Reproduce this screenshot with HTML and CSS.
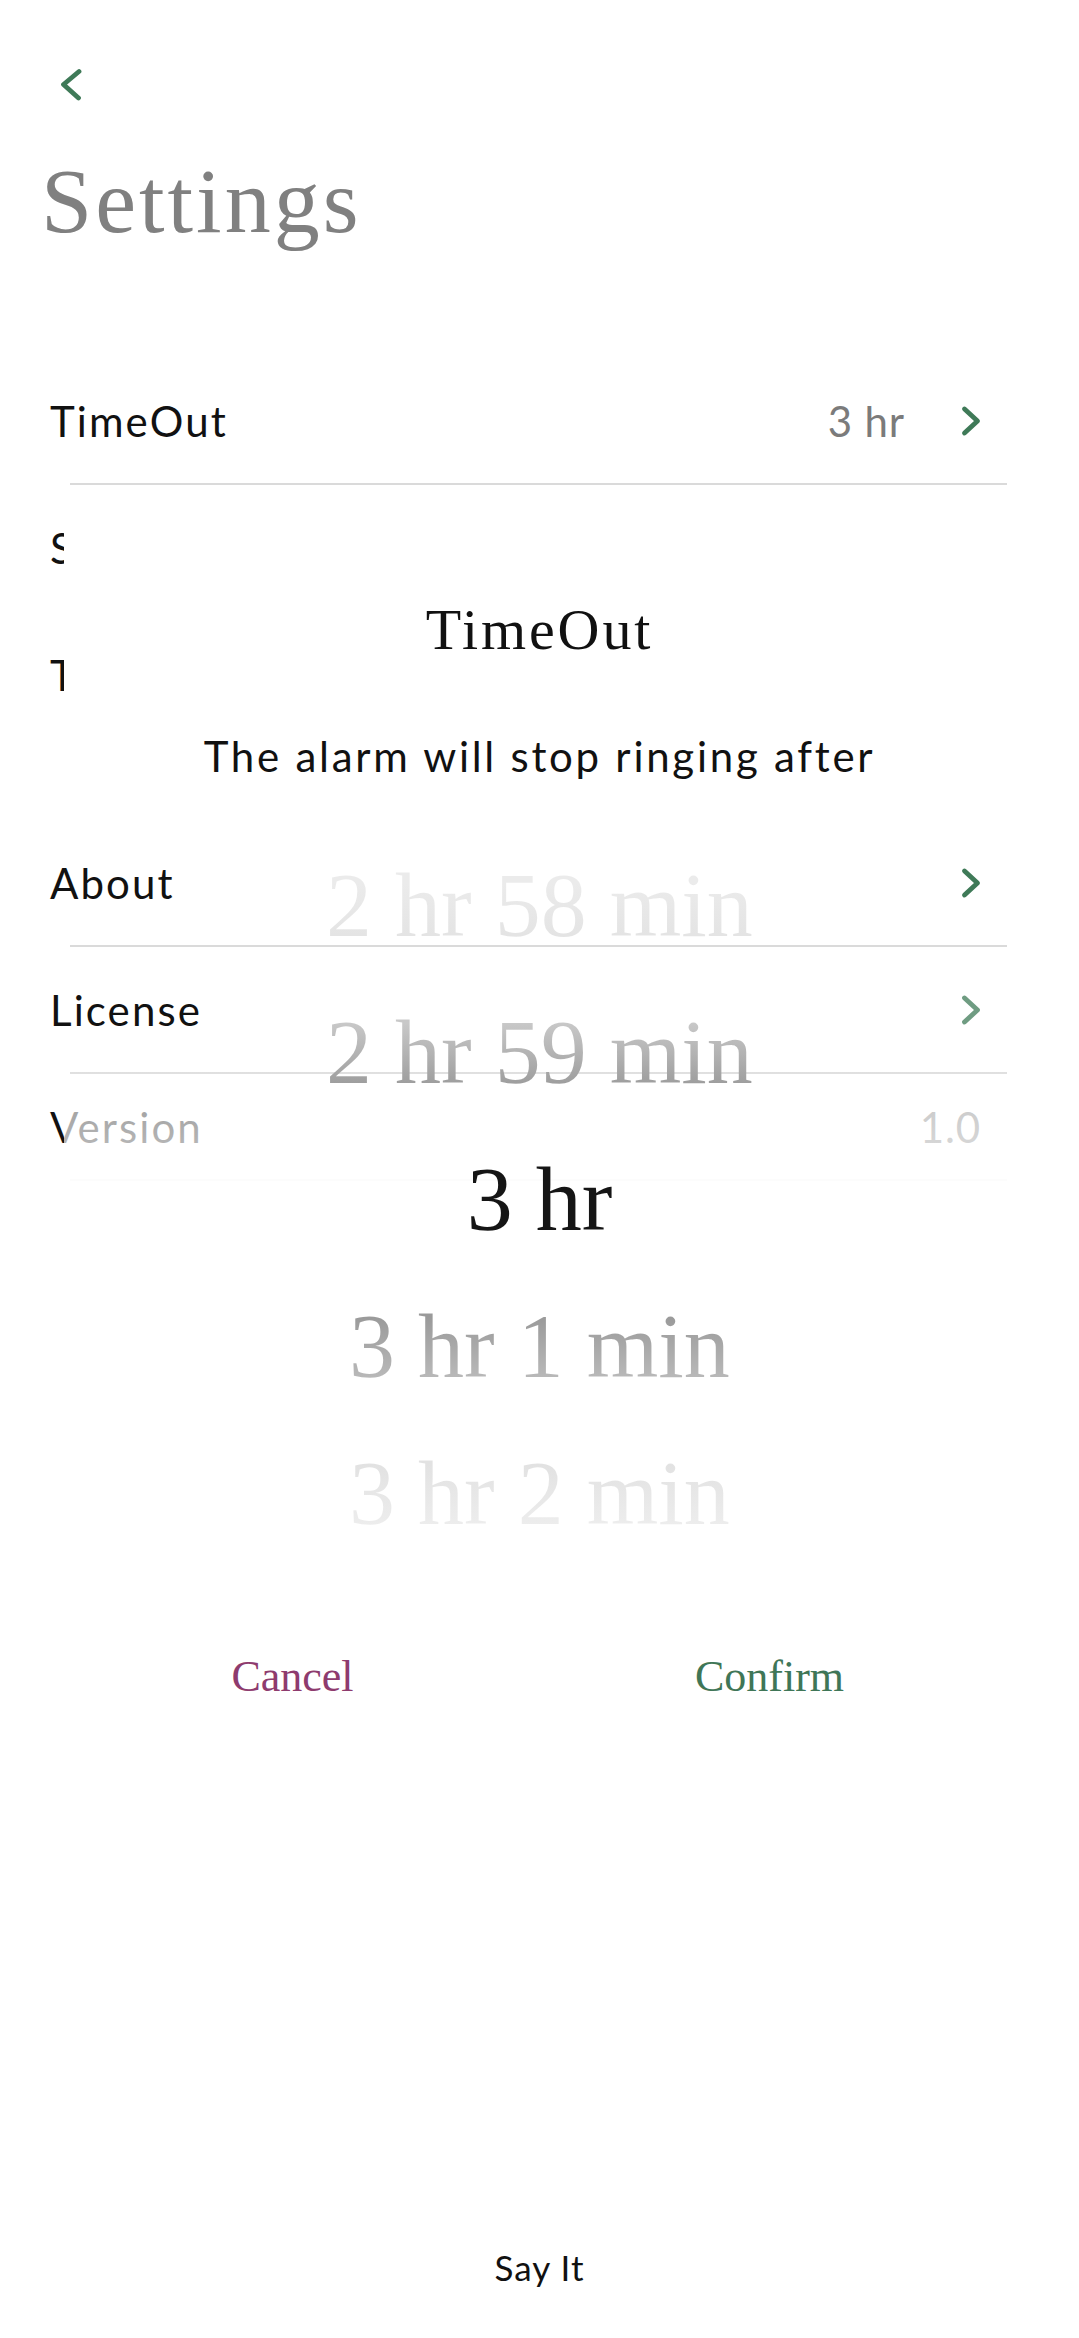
FILE: index.html
```html
<!DOCTYPE html>
<html lang="en">
<head>
<meta charset="utf-8">
<title>Settings</title>
<link rel="stylesheet" href="styles.css">
</head>
<body>
<div class="screen">
  <header class="topbar">
    <button class="back" aria-label="Back">
      <svg class="back-icon" viewBox="0 0 22 33" width="22" height="33"><path d="M19 3.5 L3.5 16.5 L18.5 30" /></svg>
    </button>
  </header>
  <h1 class="title">Settings</h1>

  <ul class="list">
    <li class="row">
      <span class="label">TimeOut</span>
      <span class="value">3 hr</span>
      <svg class="chev" viewBox="0 0 20 32" width="20" height="32"><path d="M3.5 4 L16.5 16 L3.5 28" /></svg>
    </li>
    <li class="row">
      <span class="label">Snooze</span>
      <svg class="chev" viewBox="0 0 20 32" width="20" height="32"><path d="M3.5 4 L16.5 16 L3.5 28" /></svg>
    </li>
    <li class="row">
      <span class="label">Theme</span>
      <svg class="chev" viewBox="0 0 20 32" width="20" height="32"><path d="M3.5 4 L16.5 16 L3.5 28" /></svg>
    </li>
    <li class="spacer"></li>
    <li class="row">
      <span class="label">About</span>
      <svg class="chev" viewBox="0 0 20 32" width="20" height="32"><path d="M3.5 4 L16.5 16 L3.5 28" /></svg>
    </li>
    <li class="row">
      <span class="label">License</span>
      <svg class="chev chev-soft" viewBox="0 0 20 32" width="20" height="32"><path d="M3.5 4 L16.5 16 L3.5 28" /></svg>
    </li>
    <li class="row row-plain">
      <span class="label">Version</span>
      <span class="value">1.0</span>
    </li>
  </ul>

  <footer class="footer">Say It</footer>
</div>

<section class="sheet" role="dialog" aria-label="TimeOut">
  <h2 class="sheet-title">TimeOut</h2>
  <p class="sheet-sub">The alarm will stop ringing after</p>
  <div class="picker">
    <div class="pick pick-far-top">2 hr 58 min</div>
    <div class="pick pick-near-top">2 hr 59 min</div>
    <div class="pick pick-selected">3 hr</div>
    <div class="pick pick-near-bottom">3 hr 1 min</div>
    <div class="pick pick-far-bottom">3 hr 2 min</div>
  </div>
  <div class="actions">
    <button class="action action-cancel">Cancel</button>
    <button class="action action-confirm">Confirm</button>
  </div>
</section>
</body>
</html>
```

FILE: styles.css
```css
* { box-sizing: border-box; }

html, body {
  margin: 0;
  padding: 0;
  background: #ffffff;
}

body {
  position: relative;
  width: 1079px;
  min-height: 2338px;
  font-family: Lato, "Noto Sans", sans-serif;
  color: #111111;
  overflow: hidden;
}

.screen {
  display: flex;
  flex-direction: column;
  min-height: 2338px;
}

.topbar {
  height: 101px;
  padding: 68px 0 0 60px;
}

.back {
  display: block;
  padding: 0;
  margin: 0;
  border: 0;
  background: none;
  line-height: 0;
}

.back-icon {
  display: block;
  fill: none;
  stroke: #3f7a58;
  stroke-width: 4.8;
  stroke-linecap: round;
  stroke-linejoin: round;
}

.title {
  margin: 50px 0 0 41px;
  font-family: "Liberation Serif", serif;
  font-weight: 400;
  font-size: 92px;
  line-height: 100px;
  letter-spacing: 3px;
  color: #808080;
}

.list {
  list-style: none;
  margin: 107px 0 0 0;
  padding: 0;
}

.row {
  display: flex;
  align-items: center;
  height: 127px;
  padding: 0 98px 2px 50px;
  font-size: 42px;
  line-height: 50px;
  letter-spacing: 0.05em;
  background-image: linear-gradient(#dadada, #dadada);
  background-repeat: no-repeat;
  background-position: 70px 100%;
  background-size: 937px 2px;
}

.row-plain {
  height: 107px;
}

.spacer {
  height: 81px;
}

.label {
  flex: 1;
  color: #111111;
}

.value {
  color: #7b7b7b;
  letter-spacing: 0.02em;
}

.chev {
  display: block;
  margin-left: 56px;
  fill: none;
  stroke: #3f7a58;
  stroke-width: 4.8;
  stroke-linecap: round;
  stroke-linejoin: round;
}

.chev-soft {
  stroke: #6f9c82;
}

.footer {
  margin-top: auto;
  padding-bottom: 46px;
  text-align: center;
  font-size: 35px;
  line-height: 50px;
  letter-spacing: 0.03em;
  color: #111111;
}

/* Bottom-sheet dialog laid over the settings list */
.sheet {
  position: absolute;
  top: 500px;
  left: 0;
  right: 0;
  height: 1300px;
  padding-top: 95px;
  text-align: center;
  background-image: linear-gradient(to bottom,
    #ffffff 0px,
    #ffffff 300px,
    rgba(255,255,255,0) 320px,
    rgba(255,255,255,0) 560px,
    rgba(255,255,255,0.62) 610px,
    rgba(255,255,255,0.7) 650px,
    rgba(255,255,255,0.93) 681px,
    #ffffff 720px,
    #ffffff 100%);
  background-repeat: no-repeat;
  background-position: 64px 0;
  background-size: calc(100% - 64px) 100%;
}

.sheet-title {
  margin: 0;
  font-family: "Liberation Serif", serif;
  font-weight: 400;
  font-size: 58px;
  line-height: 70px;
  letter-spacing: 0.05em;
  color: #111111;
}

.sheet-sub {
  margin: 61px 0 0 0;
  font-size: 42px;
  line-height: 60px;
  letter-spacing: 0.065em;
  color: #111111;
}

.picker {
  margin-top: 46px;
  display: flex;
  flex-direction: column;
}

.pick {
  height: 147px;
  font-family: "Liberation Serif", serif;
  font-size: 92px;
  line-height: 147px;
  white-space: nowrap;
  color: transparent;
  -webkit-background-clip: text;
  background-clip: text;
}

.pick-far-top {
  background-image: linear-gradient(to bottom, #ebebeb 35%, #e2e2e2 80%);
}

.pick-near-top {
  background-image: linear-gradient(to bottom, #c8c8c8 30%, #959595 80%);
}

.pick-selected {
  background-image: linear-gradient(#151515, #151515);
}

.pick-near-bottom {
  background-image: linear-gradient(to bottom, #9a9a9a 30%, #bfbfbf 80%);
}

.pick-far-bottom {
  background-image: linear-gradient(to bottom, #e2e2e2 30%, #efefef 80%);
}

.actions {
  display: grid;
  grid-template-columns: 1fr 1fr;
  margin-top: 80px;
  padding: 0 71px 0 54px;
}

.action {
  justify-self: center;
  padding: 0;
  border: 0;
  background: none;
  font-family: "Liberation Serif", serif;
  font-size: 44px;
  line-height: 60px;
}

.action-cancel { color: #8e3b6e; }
.action-confirm { color: #3f7657; }
```
